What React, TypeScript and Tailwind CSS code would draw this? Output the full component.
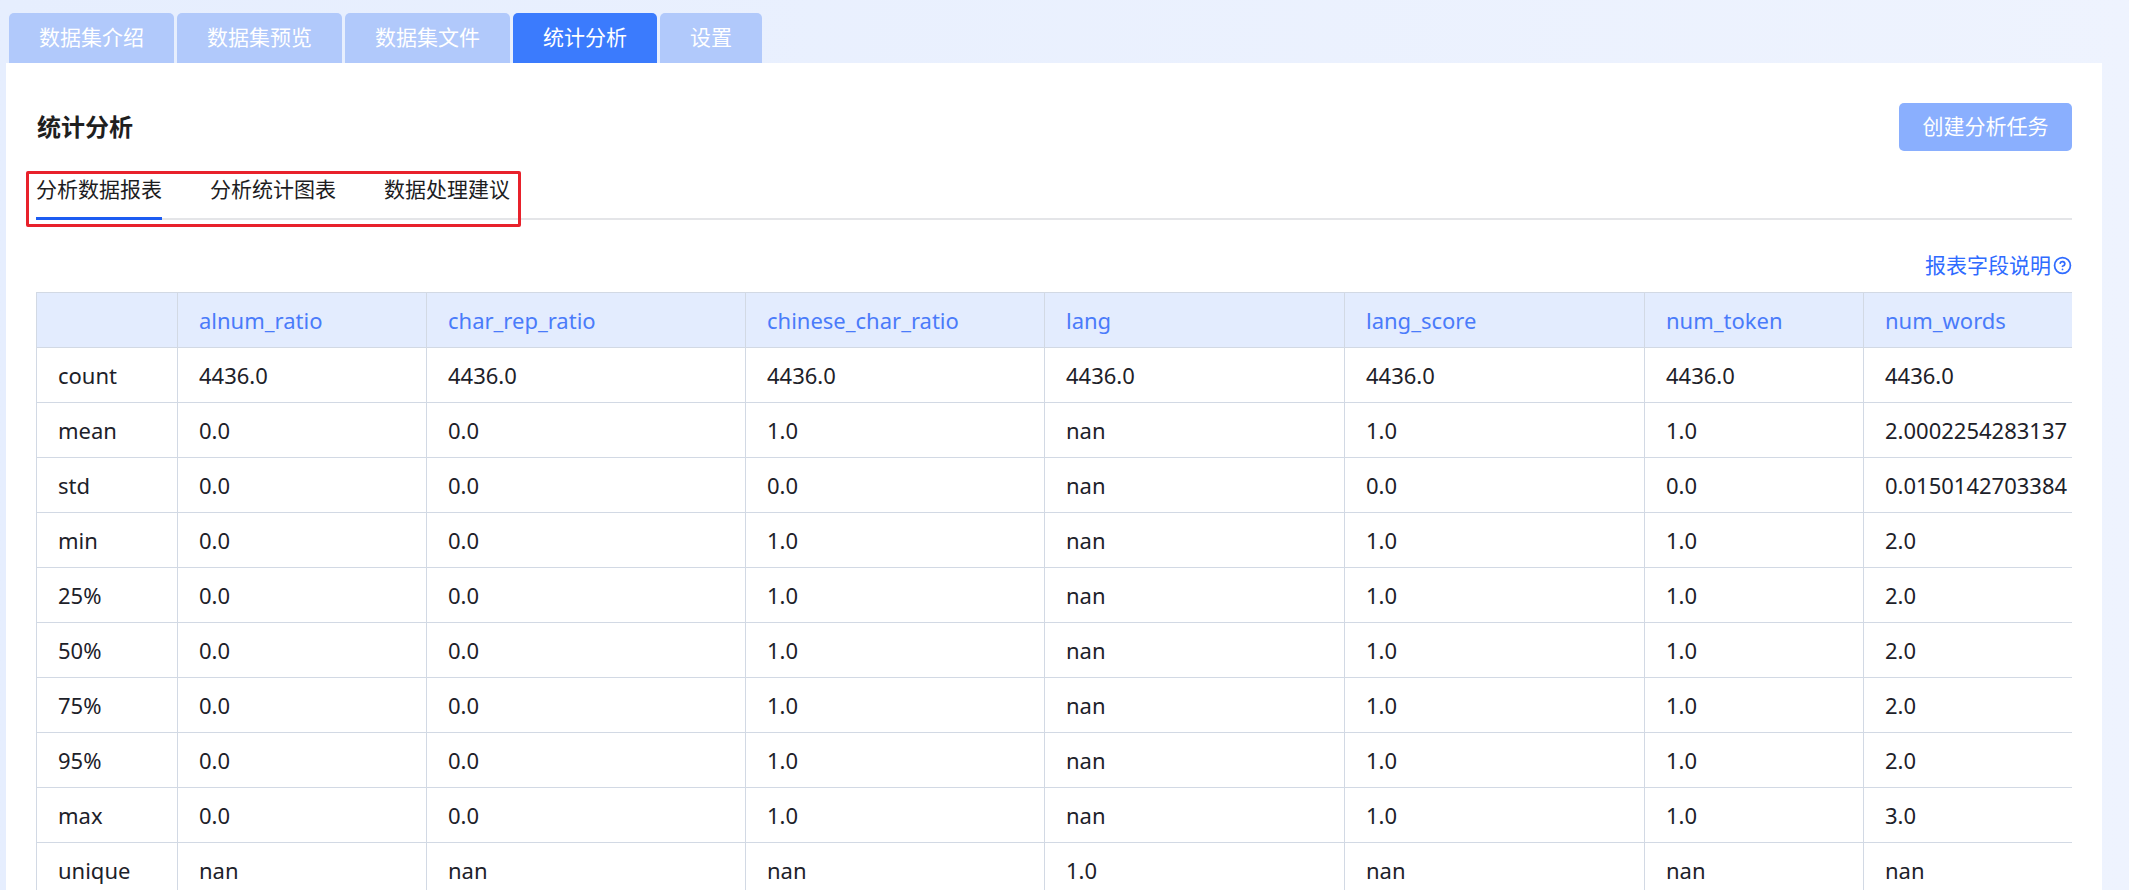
import React from "react";
import { CircleHelp } from "lucide-react";

const FONT = '"Noto Sans", "Noto Sans CJK SC", sans-serif';

const tabs = [
  { label: "数据集介绍", active: false },
  { label: "数据集预览", active: false },
  { label: "数据集文件", active: false },
  { label: "统计分析", active: true },
  { label: "设置", active: false },
];

const subTabs = ["分析数据报表", "分析统计图表", "数据处理建议"];

const columns = [
  "alnum_ratio",
  "char_rep_ratio",
  "chinese_char_ratio",
  "lang",
  "lang_score",
  "num_token",
  "num_words",
];

const colWidths = [141, 249, 319, 299, 300, 300, 219, 320];

const rows: [string, string[]][] = [
  ["count", ["4436.0", "4436.0", "4436.0", "4436.0", "4436.0", "4436.0", "4436.0"]],
  ["mean", ["0.0", "0.0", "1.0", "nan", "1.0", "1.0", "2.0002254283137"]],
  ["std", ["0.0", "0.0", "0.0", "nan", "0.0", "0.0", "0.0150142703384"]],
  ["min", ["0.0", "0.0", "1.0", "nan", "1.0", "1.0", "2.0"]],
  ["25%", ["0.0", "0.0", "1.0", "nan", "1.0", "1.0", "2.0"]],
  ["50%", ["0.0", "0.0", "1.0", "nan", "1.0", "1.0", "2.0"]],
  ["75%", ["0.0", "0.0", "1.0", "nan", "1.0", "1.0", "2.0"]],
  ["95%", ["0.0", "0.0", "1.0", "nan", "1.0", "1.0", "2.0"]],
  ["max", ["0.0", "0.0", "1.0", "nan", "1.0", "1.0", "3.0"]],
  ["unique", ["nan", "nan", "nan", "1.0", "nan", "nan", "nan"]],
];

export default function App() {
  return (
    <div
      className="min-h-[890px] w-full bg-gradient-to-r from-[#e6eefe] to-[#eef3fe] pt-[13px]"
      style={{ fontFamily: FONT }}
    >
      {/* top tabs */}
      <div className="flex gap-[3px] pl-[9px]">
        {tabs.map((t) => (
          <div
            key={t.label}
            className={
              "flex h-[50px] items-center rounded-t-[5px] px-[30px] text-[21px] text-white " +
              (t.active ? "bg-[#3b7bfd]" : "bg-[#b1c9fb]")
            }
          >
            {t.label}
          </div>
        ))}
      </div>

      {/* card */}
      <div className="ml-[6px] w-[2096px] bg-white px-[30px] pt-[40px] pb-[40px]">
        <div className="flex h-[48px] items-center justify-between">
          <div className="pl-[1px] text-[24px] font-bold text-[#1f1f1f]">统计分析</div>
          <button className="flex h-[48px] w-[173px] items-center justify-center rounded-[5px] bg-[#8aaffe] text-[21px] text-white">
            创建分析任务
          </button>
        </div>

        {/* sub tabs */}
        <div className="relative mt-[23px] border-b-2 border-[#e4e5e8]">
          <div className="flex gap-[48px]">
            {subTabs.map((s, i) => (
              <div key={s} className="relative pb-[14px]">
                <div className="text-[21px] leading-[30px] text-[#1d1d1f]">{s}</div>
                {i === 0 && (
                  <div className="absolute bottom-[-2px] left-0 h-[3px] w-full bg-[#1c5cf2]" />
                )}
              </div>
            ))}
          </div>
          <div className="pointer-events-none absolute left-[-10px] top-[-3px] h-[56px] w-[495px] rounded-[2px] border-[3px] border-[#e8212b]" />
        </div>

        {/* field description link */}
        <div className="mt-[30px] flex items-center justify-end gap-[2px] text-[21px] leading-[30px] text-[#2f6bff]">
          <span>报表字段说明</span>
          <CircleHelp size={19} strokeWidth={2.2} className="text-[#2f6bff]" />
        </div>

        {/* table */}
        <div className="mt-[12px] w-[2036px] overflow-hidden">
          <table
            className="table-fixed border-collapse text-[22px]"
            style={{ width: colWidths.reduce((a, b) => a + b, 0) }}
          >
            <colgroup>
              {colWidths.map((w, i) => (
                <col key={i} style={{ width: w }} />
              ))}
            </colgroup>
            <thead>
              <tr className="h-[55px] bg-[#e3ecfe]">
                <th className="border border-[#d2d9e4]" />
                {columns.map((c) => (
                  <th
                    key={c}
                    className="whitespace-nowrap border border-[#d2d9e4] px-[21px] text-left font-normal text-[#4a7bfa]"
                  >
                    {c}
                  </th>
                ))}
              </tr>
            </thead>
            <tbody>
              {rows.map(([name, vals]) => (
                <tr key={name} className="h-[55px]">
                  <td className="border border-[#d2d9e4] px-[21px] text-[#1d2129]">
                    {name}
                  </td>
                  {vals.map((v, i) => (
                    <td
                      key={i}
                      className="overflow-hidden whitespace-nowrap border border-[#d2d9e4] px-[21px] text-[#1d2129]"
                    >
                      {v}
                    </td>
                  ))}
                </tr>
              ))}
            </tbody>
          </table>
        </div>
      </div>
    </div>
  );
}
